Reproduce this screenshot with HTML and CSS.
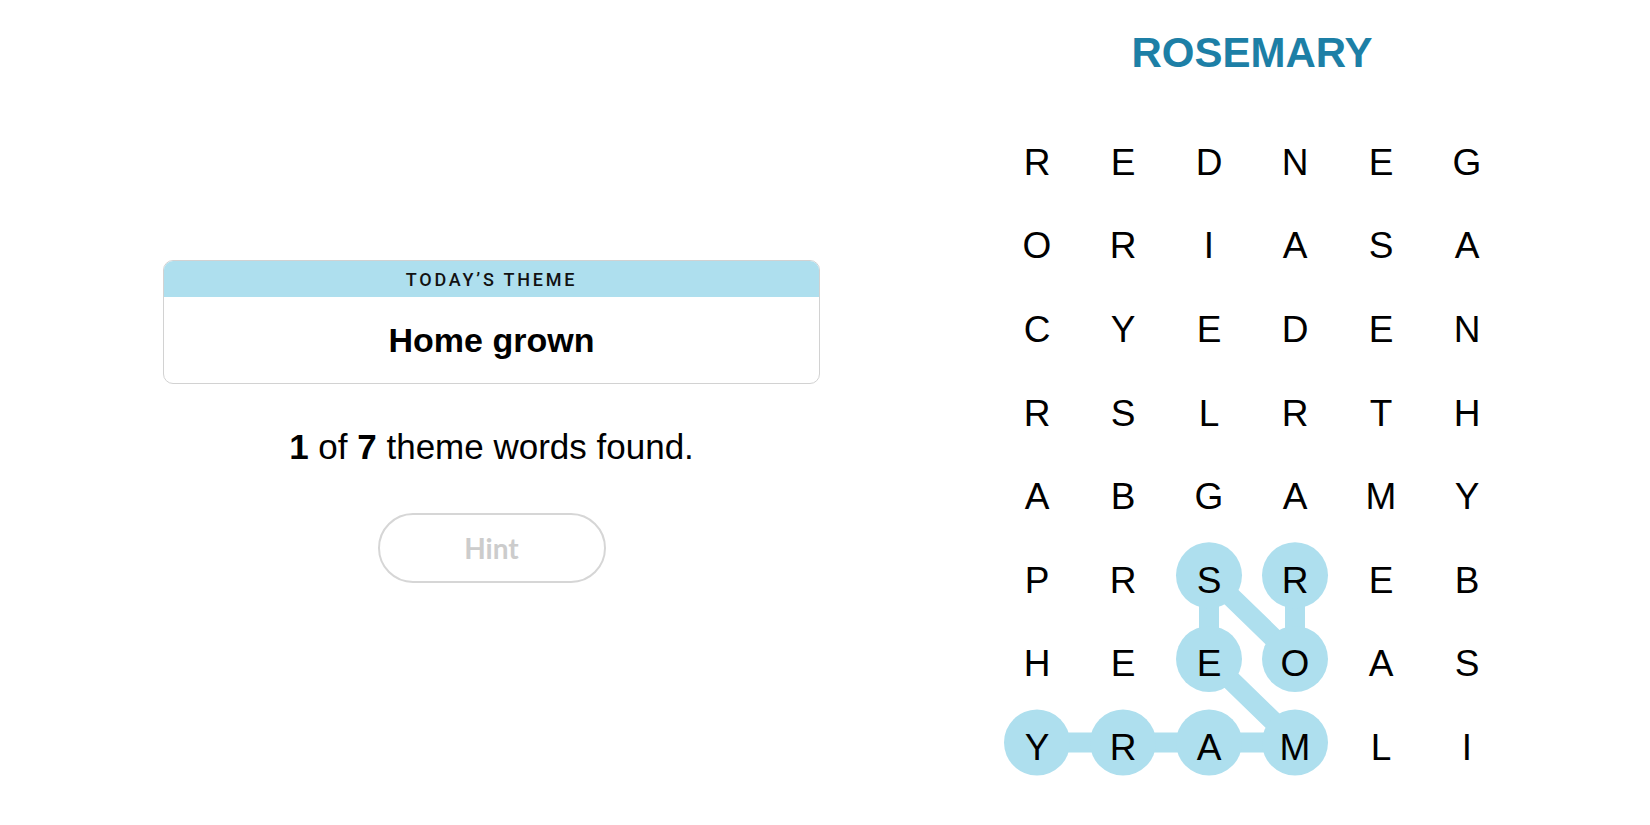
FILE: index.html
```html
<!DOCTYPE html>
<html lang="en">
<head>
<meta charset="utf-8">
<title>Strands</title>
<link rel="stylesheet" href="styles.css">
</head>
<body>
<div class="page">
  <section class="info">
    <div class="theme-card">
      <div class="theme-head">TODAY’S THEME</div>
      <div class="theme-body">Home grown</div>
    </div>
    <p class="count"><b>1</b> of <b>7</b> theme words found.</p>
    <button class="hint" type="button">Hint</button>
  </section>
  <section class="board">
    <h1 class="word">ROSEMARY</h1>
    <div class="grid">
      <svg class="trail" width="516" height="669" viewBox="0 0 516 669" aria-hidden="true">
        <polyline points="301,454.3 301,537.9 215,454.3 215,537.9 301,621.5 215,621.5 129,621.5 43,621.5" fill="none" stroke="#aedfee" stroke-width="20" stroke-linejoin="round" stroke-linecap="round"/>
        <g fill="#aedfee">
          <circle cx="301" cy="454.3" r="33"/>
          <circle cx="301" cy="537.9" r="33"/>
          <circle cx="215" cy="454.3" r="33"/>
          <circle cx="215" cy="537.9" r="33"/>
          <circle cx="301" cy="621.5" r="33"/>
          <circle cx="215" cy="621.5" r="33"/>
          <circle cx="129" cy="621.5" r="33"/>
          <circle cx="43" cy="621.5" r="33"/>
        </g>
      </svg>
      <span class="cell">R</span><span class="cell">E</span><span class="cell">D</span><span class="cell">N</span><span class="cell">E</span><span class="cell">G</span>
      <span class="cell">O</span><span class="cell">R</span><span class="cell">I</span><span class="cell">A</span><span class="cell">S</span><span class="cell">A</span>
      <span class="cell">C</span><span class="cell">Y</span><span class="cell">E</span><span class="cell">D</span><span class="cell">E</span><span class="cell">N</span>
      <span class="cell">R</span><span class="cell">S</span><span class="cell">L</span><span class="cell">R</span><span class="cell">T</span><span class="cell">H</span>
      <span class="cell">A</span><span class="cell">B</span><span class="cell">G</span><span class="cell">A</span><span class="cell">M</span><span class="cell">Y</span>
      <span class="cell">P</span><span class="cell">R</span><span class="cell">S</span><span class="cell">R</span><span class="cell">E</span><span class="cell">B</span>
      <span class="cell">H</span><span class="cell">E</span><span class="cell">E</span><span class="cell">O</span><span class="cell">A</span><span class="cell">S</span>
      <span class="cell">Y</span><span class="cell">R</span><span class="cell">A</span><span class="cell">M</span><span class="cell">L</span><span class="cell">I</span>
    </div>
  </section>
</div>
</body>
</html>
```

FILE: styles.css
```css
html, body {
  margin: 0;
  padding: 0;
  background: #ffffff;
}

body {
  width: 1650px;
  height: 825px;
  overflow: hidden;
  font-family: "Liberation Sans", Arial, sans-serif;
  color: #000;
}

.page {
  display: flex;
  flex-direction: row;
  align-items: flex-start;
}

.info {
  width: 983px;
  display: flex;
  flex-direction: column;
  align-items: center;
  padding-top: 260px;
}

.theme-card {
  width: 657px;
  box-sizing: border-box;
  border: 1px solid #d2d2d2;
  border-radius: 10px;
  overflow: hidden;
  display: flex;
  flex-direction: column;
}

.theme-head {
  height: 36px;
  background: #aedfee;
  display: flex;
  align-items: center;
  justify-content: center;
  font-family: Roboto, "Liberation Sans", sans-serif;
  font-weight: 500;
  font-size: 18px;
  letter-spacing: 2.8px;
  color: #121212;
  padding-top: 1px;
  box-sizing: border-box;
}

.theme-body {
  height: 86px;
  display: flex;
  align-items: center;
  justify-content: center;
  font-weight: 700;
  font-size: 34px;
  color: #000;
}

.count {
  margin: 42px 0 0 0;
  font-size: 35px;
  line-height: 42px;
  color: #000;
}

.count b {
  font-weight: 700;
}

.hint {
  margin-top: 45px;
  width: 228px;
  height: 70px;
  box-sizing: border-box;
  border: 2px solid #d6d6d6;
  border-radius: 35px;
  background: #fff;
  font-family: Lato, "Liberation Sans", sans-serif;
  font-weight: 700;
  font-size: 28px;
  color: #cccccc;
  padding: 0;
}

.board {
  width: 516px;
  margin-left: 11px;
  padding-top: 28px;
  display: flex;
  flex-direction: column;
}

.word {
  margin: 0;
  font-size: 42px;
  line-height: 50px;
  font-weight: 700;
  text-align: center;
  color: #1d7fa6;
}

.grid {
  position: relative;
  margin-top: 43px;
  display: grid;
  grid-template-columns: repeat(6, 86px);
  grid-auto-rows: 83.6px;
}

.trail {
  position: absolute;
  left: 0;
  top: 0;
  z-index: 0;
}

.cell {
  position: relative;
  z-index: 1;
  display: flex;
  align-items: center;
  justify-content: center;
  font-size: 37px;
  color: #000;
}
```
